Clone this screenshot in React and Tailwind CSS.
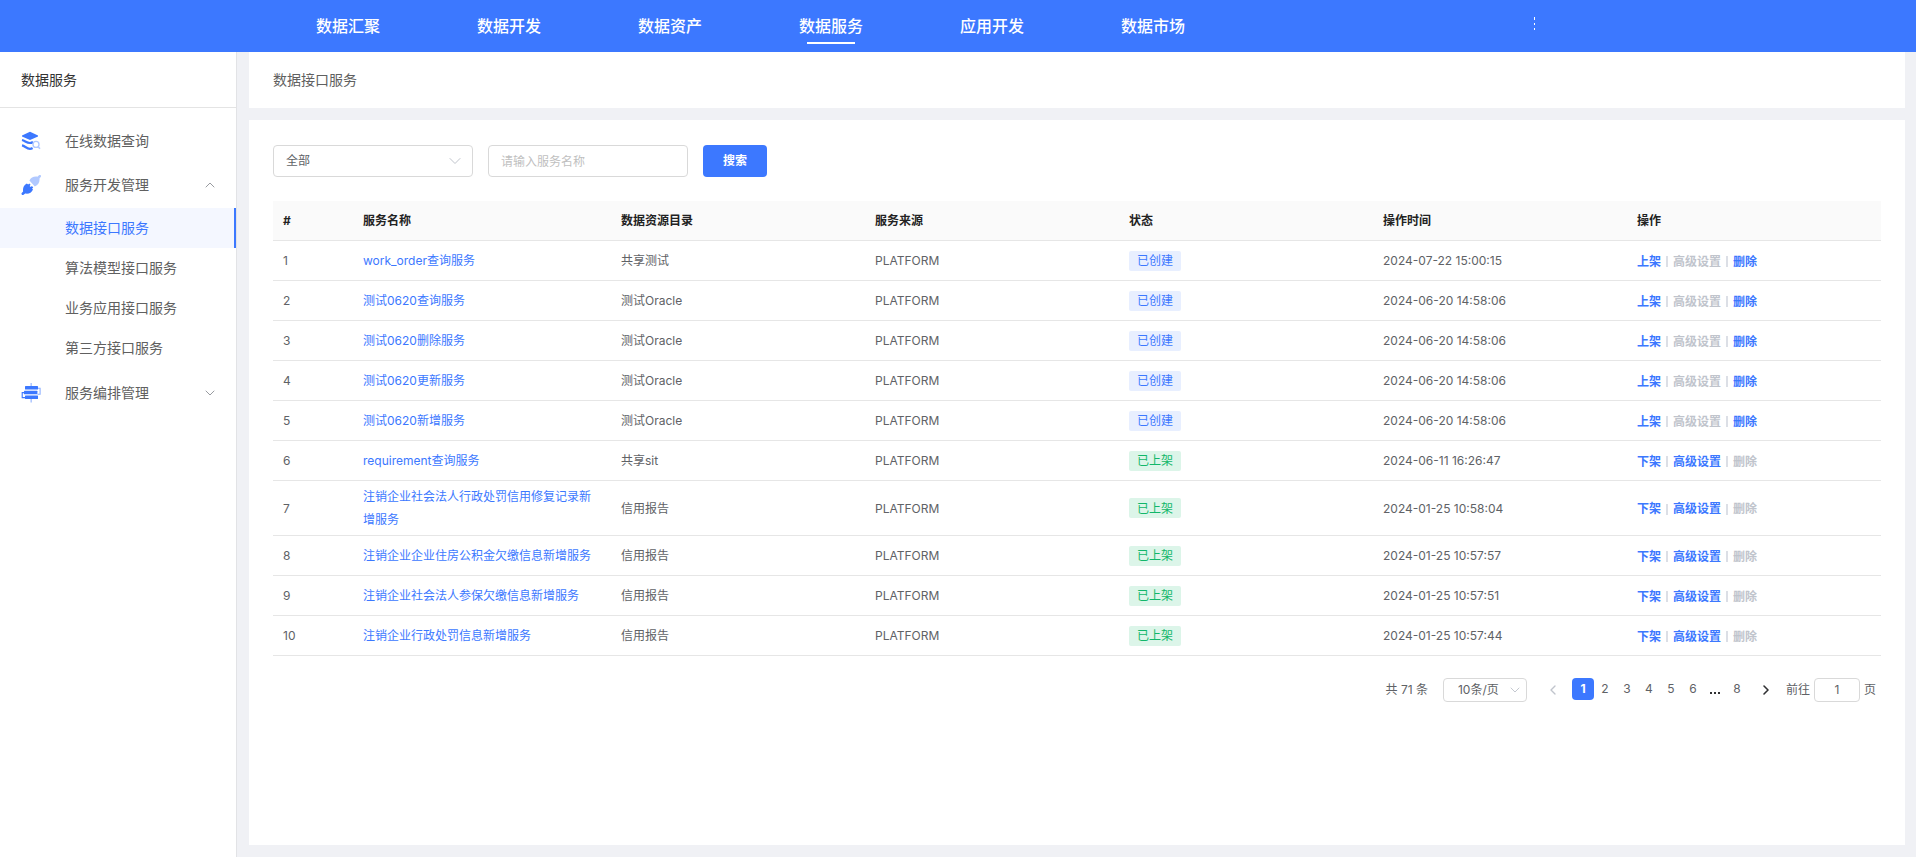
import { useState } from 'react';
import { ChevronDown, ChevronLeft, ChevronRight, ChevronUp } from 'lucide-react';

const navItems = ['数据汇聚', '数据开发', '数据资产', '数据服务', '应用开发', '数据市场'];

const subMenu = ['数据接口服务', '算法模型接口服务', '业务应用接口服务', '第三方接口服务'];

const columns = ['#', '服务名称', '数据资源目录', '服务来源', '状态', '操作时间', '操作'];

const rows = [
  { id: 1, name: 'work_order查询服务', catalog: '共享测试', online: false, time: '2024-07-22 15:00:15' },
  { id: 2, name: '测试0620查询服务', catalog: '测试Oracle', online: false, time: '2024-06-20 14:58:06' },
  { id: 3, name: '测试0620删除服务', catalog: '测试Oracle', online: false, time: '2024-06-20 14:58:06' },
  { id: 4, name: '测试0620更新服务', catalog: '测试Oracle', online: false, time: '2024-06-20 14:58:06' },
  { id: 5, name: '测试0620新增服务', catalog: '测试Oracle', online: false, time: '2024-06-20 14:58:06' },
  { id: 6, name: 'requirement查询服务', catalog: '共享sit', online: true, time: '2024-06-11 16:26:47' },
  { id: 7, name: '注销企业社会法人行政处罚信用修复记录新增服务', catalog: '信用报告', online: true, time: '2024-01-25 10:58:04' },
  { id: 8, name: '注销企业企业住房公积金欠缴信息新增服务', catalog: '信用报告', online: true, time: '2024-01-25 10:57:57' },
  { id: 9, name: '注销企业社会法人参保欠缴信息新增服务', catalog: '信用报告', online: true, time: '2024-01-25 10:57:51' },
  { id: 10, name: '注销企业行政处罚信息新增服务', catalog: '信用报告', online: true, time: '2024-01-25 10:57:44' },
];

function LayersIcon() {
  return (
    <svg className="size-5" viewBox="0 0 20 20" fill="none" aria-hidden="true">
      <path d="M9 .8 17 4.4v1.2L9 9 1 5.6V4.4z" fill="#3c78ff" />
      <path
        d="M1 9c3 .6 4.5 3 8 3 1.2 0 2.200-.4 3-1M1 14.400c3 .6 4.500 3.400 8 3.400 1 0 1.800-.3 2.600-.8"
        stroke="#3c78ff"
        strokeWidth="2.2"
      />
      <circle cx="15" cy="13.4" r="3" stroke="#b1c9ff" strokeWidth="1.4" />
      <path d="m17 15.6 2 2.2" stroke="#b1c9ff" strokeWidth="1.6" />
    </svg>
  );
}

function PlugIcon() {
  return (
    <svg className="size-5" viewBox="0 0 20 20" aria-hidden="true">
      <path
        d="M8.4 5.6C9.8 2.6 12.8 1.2 16.4 1.7L18 .3a1.1 1.1 0 0 1 1.7 1.6L18.5 3.5c.4 3.8-1.3 6.6-4.7 8z"
        fill="#b1c9ff"
      />
      <path
        d="M5.8 8.4 7.2 9.6l1-1.2 1.4 1.3-1 1.2 1.2 1.2 1.1-1 1.3 1.3-1.1 1.1.9 1c-1.3 3.4-4.4 4.7-7.8 4.1l-1.6 1.2a1.3 1.3 0 0 1-1.9-1.7l1.4-1.7c-.4-3.4.5-6.6 3.7-8z"
        fill="#3c78ff"
      />
    </svg>
  );
}

function FlowIcon() {
  return (
    <svg className="size-5" viewBox="0 0 20 20" fill="none" aria-hidden="true">
      <path d="M10.2 0v4M10.2 15.5v4" stroke="#b1c9ff" strokeWidth="1.6" />
      <path d="M16.5 5.2h2.6v6h-2.6" stroke="#8fb1ff" strokeWidth="1.1" />
      <path d="M4 9.6H1.2v5H4" stroke="#3c78ff" strokeWidth="1.1" />
      <rect x="4" y="3" width="13" height="3.6" rx=".5" fill="#3c78ff" />
      <rect x="3" y="7.7" width="13.4" height="3.6" rx=".5" fill="#3c78ff" />
      <rect x="4" y="12.4" width="13" height="3.6" rx=".5" fill="#3c78ff" />
    </svg>
  );
}

function Header() {
  return (
    <header className="flex h-[52px] bg-[#3c78ff] pl-[316px] text-base font-medium text-white">
      <nav className="flex gap-[97px]">
        {navItems.map((item) => (
          <a key={item} href="#" className="flex flex-col items-center whitespace-nowrap pt-3.5">
            <span className="leading-6">{item}</span>
            {item === '数据服务' && <span className="mt-1 h-0.5 w-12 bg-white" />}
          </a>
        ))}
      </nav>
      <button aria-label="更多" className="mr-[381px] ml-auto flex flex-col gap-[3px] pt-[17px]">
        <span className="h-[3px] w-px bg-white" />
        <span className="h-0.5 w-px bg-white" />
        <span className="h-0.5 w-px bg-white" />
      </button>
    </header>
  );
}

function Sidebar() {
  const groupClass = 'flex h-11 w-full items-center pl-[21px] pr-[18px] text-left';

  return (
    <aside className="w-[237px] shrink-0 border-r border-[#e2e3e6] bg-white text-sm text-[#606060]">
      <h2 className="flex h-14 items-center border-b border-[#e4e4e4] pl-[21px] text-[#333]">数据服务</h2>
      <nav className="pt-[11px]">
        <a href="#" className={groupClass}>
          <LayersIcon />
          <span className="ml-6">在线数据查询</span>
        </a>
        <button className={groupClass}>
          <PlugIcon />
          <span className="ml-6">服务开发管理</span>
          <ChevronUp className="ml-auto size-4 text-[#909399]" strokeWidth={1.4} />
        </button>
        <ul className="pt-px pb-[3px]">
          {subMenu.map((item, i) => (
            <li key={item}>
              <a
                href="#"
                className={
                  i === 0
                    ? 'flex h-10 items-center border-r-2 border-[#3c78ff] bg-[#f4f7ff] pl-[65px] text-[#3c78ff]'
                    : 'flex h-10 items-center pl-[65px]'
                }
              >
                {item}
              </a>
            </li>
          ))}
        </ul>
        <button className={groupClass}>
          <FlowIcon />
          <span className="ml-6">服务编排管理</span>
          <ChevronDown className="ml-auto size-4 text-[#909399]" strokeWidth={1.4} />
        </button>
      </nav>
    </aside>
  );
}

function SearchBar() {
  const [keyword, setKeyword] = useState('');

  return (
    <form className="flex items-center gap-[15px]" onSubmit={(e) => e.preventDefault()}>
      <div className="relative">
        <select
          aria-label="状态"
          className="h-8 w-[200px] appearance-none rounded border border-[#d9d9d9] bg-white pl-3 text-[#606266]"
        >
          <option>全部</option>
        </select>
        <ChevronDown
          className="pointer-events-none absolute top-1.5 right-2 size-5 text-[#c0c4cc]"
          strokeWidth={1.2}
        />
      </div>
      <input
        aria-label="服务名称"
        className="h-8 w-[200px] rounded border border-[#d9d9d9] px-3 placeholder:text-[#bfbfbf]"
        placeholder="请输入服务名称"
        value={keyword}
        onChange={(e) => setKeyword(e.target.value)}
      />
      <button type="submit" className="h-8 w-16 rounded bg-[#3c78ff] font-bold text-white">
        搜索
      </button>
    </form>
  );
}

function RowActions({ online }) {
  const enabled = 'text-[#3c78ff]';
  const disabled = 'text-[#c0c4cc]';

  return (
    <div className="flex items-center pt-0.5 font-bold leading-5">
      <button className={enabled}>{online ? '下架' : '上架'}</button>
      <span className="mx-[5px] h-[11px] w-0.5 bg-[#dcdfe6]" />
      <button disabled={!online} className={online ? enabled : disabled}>
        高级设置
      </button>
      <span className="mx-[5px] h-[11px] w-0.5 bg-[#dcdfe6]" />
      <button disabled={online} className={online ? disabled : enabled}>
        删除
      </button>
    </div>
  );
}

function ServiceTable() {
  return (
    <table className="mt-6 w-full table-fixed border-separate border-spacing-0 text-left">
      <colgroup>
        <col className="w-20" />
        <col className="w-[258px]" />
        <col />
        <col />
        <col />
        <col />
        <col />
      </colgroup>
      <thead>
        <tr>
          {columns.map((col) => (
            <th key={col} className="h-10 border-b border-[#e6e6e6] bg-[#fafafa] px-2.5 font-bold text-[#222]">
              {col}
            </th>
          ))}
        </tr>
      </thead>
      <tbody className="[&_td]:h-10 [&_td]:border-b [&_td]:border-[#e6e6e6] [&_td]:px-2.5 [&_td]:py-1 [&_td]:leading-[23px]">
        {rows.map((row) => (
          <tr key={row.id}>
            <td>{row.id}</td>
            <td>
              <a href="#" className="text-[#3c78ff]">
                {row.name}
              </a>
            </td>
            <td>{row.catalog}</td>
            <td>PLATFORM</td>
            <td>
              <span
                className={
                  row.online
                    ? 'flex h-5 w-fit items-center rounded-xs bg-[#dcf5e9] px-2 text-[#12b76a]'
                    : 'flex h-5 w-fit items-center rounded-xs bg-[#e8efff] px-2 text-[#3c78ff]'
                }
              >
                {row.online ? '已上架' : '已创建'}
              </span>
            </td>
            <td>{row.time}</td>
            <td>
              <RowActions online={row.online} />
            </td>
          </tr>
        ))}
      </tbody>
    </table>
  );
}

function Pagination() {
  const [page, setPage] = useState('1');
  const pageClass = 'h-[22px] w-[22px] text-center';

  return (
    <div className="mt-[22px] flex items-start justify-end pr-[5px] leading-[22px]">
      <span className="mr-[15px] leading-6">共 71 条</span>
      <div className="relative">
        <select
          aria-label="每页条数"
          className="h-6 w-[84px] appearance-none rounded border border-[#d9d9d9] bg-white pl-3.5 text-[#606266]"
        >
          <option>10条/页</option>
        </select>
        <ChevronDown
          className="pointer-events-none absolute top-1 right-1 size-4 text-[#c0c4cc]"
          strokeWidth={1.4}
        />
      </div>
      <button disabled aria-label="上一页" className="ml-[18px] flex h-6 items-center text-[#c0c4cc]">
        <ChevronLeft className="size-4" strokeWidth={2} />
      </button>
      <div className="ml-[11px] flex">
        <button className="h-[22px] w-[22px] rounded bg-[#3c78ff] text-center font-bold text-white">1</button>
        {['2', '3', '4', '5', '6'].map((n) => (
          <button key={n} className={pageClass}>
            {n}
          </button>
        ))}
        <button aria-label="更多页" className="flex h-[22px] w-[22px] items-end justify-center gap-0.5 pb-1.5">
          <span className="size-0.5 bg-[#303133]" />
          <span className="size-0.5 bg-[#303133]" />
          <span className="size-0.5 bg-[#303133]" />
        </button>
        <button className={pageClass}>8</button>
      </div>
      <button aria-label="下一页" className="ml-2.5 flex h-6 items-center text-[#303133]">
        <ChevronRight className="size-4" strokeWidth={2.4} />
      </button>
      <label className="ml-3 flex gap-1 leading-6">
        前往
        <input
          className="h-6 w-[46px] rounded border border-[#d9d9d9] text-center"
          value={page}
          onChange={(e) => setPage(e.target.value)}
        />
        页
      </label>
    </div>
  );
}

export default function App() {
  return (
    <div className="flex min-h-screen flex-col bg-[#f0f1f5] font-[Inter,'Noto_Sans_CJK_SC',sans-serif] text-xs text-[#606266]">
      <Header />
      <div className="flex flex-1">
        <Sidebar />
        <main className="flex min-w-0 flex-1 flex-col gap-3 pr-[11px] pb-3 pl-3">
          <h1 className="flex h-14 items-center bg-white px-6 text-sm text-[#606060]">数据接口服务</h1>
          <section className="flex-1 bg-white px-6 pt-[25px] pb-6">
            <SearchBar />
            <ServiceTable />
            <Pagination />
          </section>
        </main>
      </div>
    </div>
  );
}
